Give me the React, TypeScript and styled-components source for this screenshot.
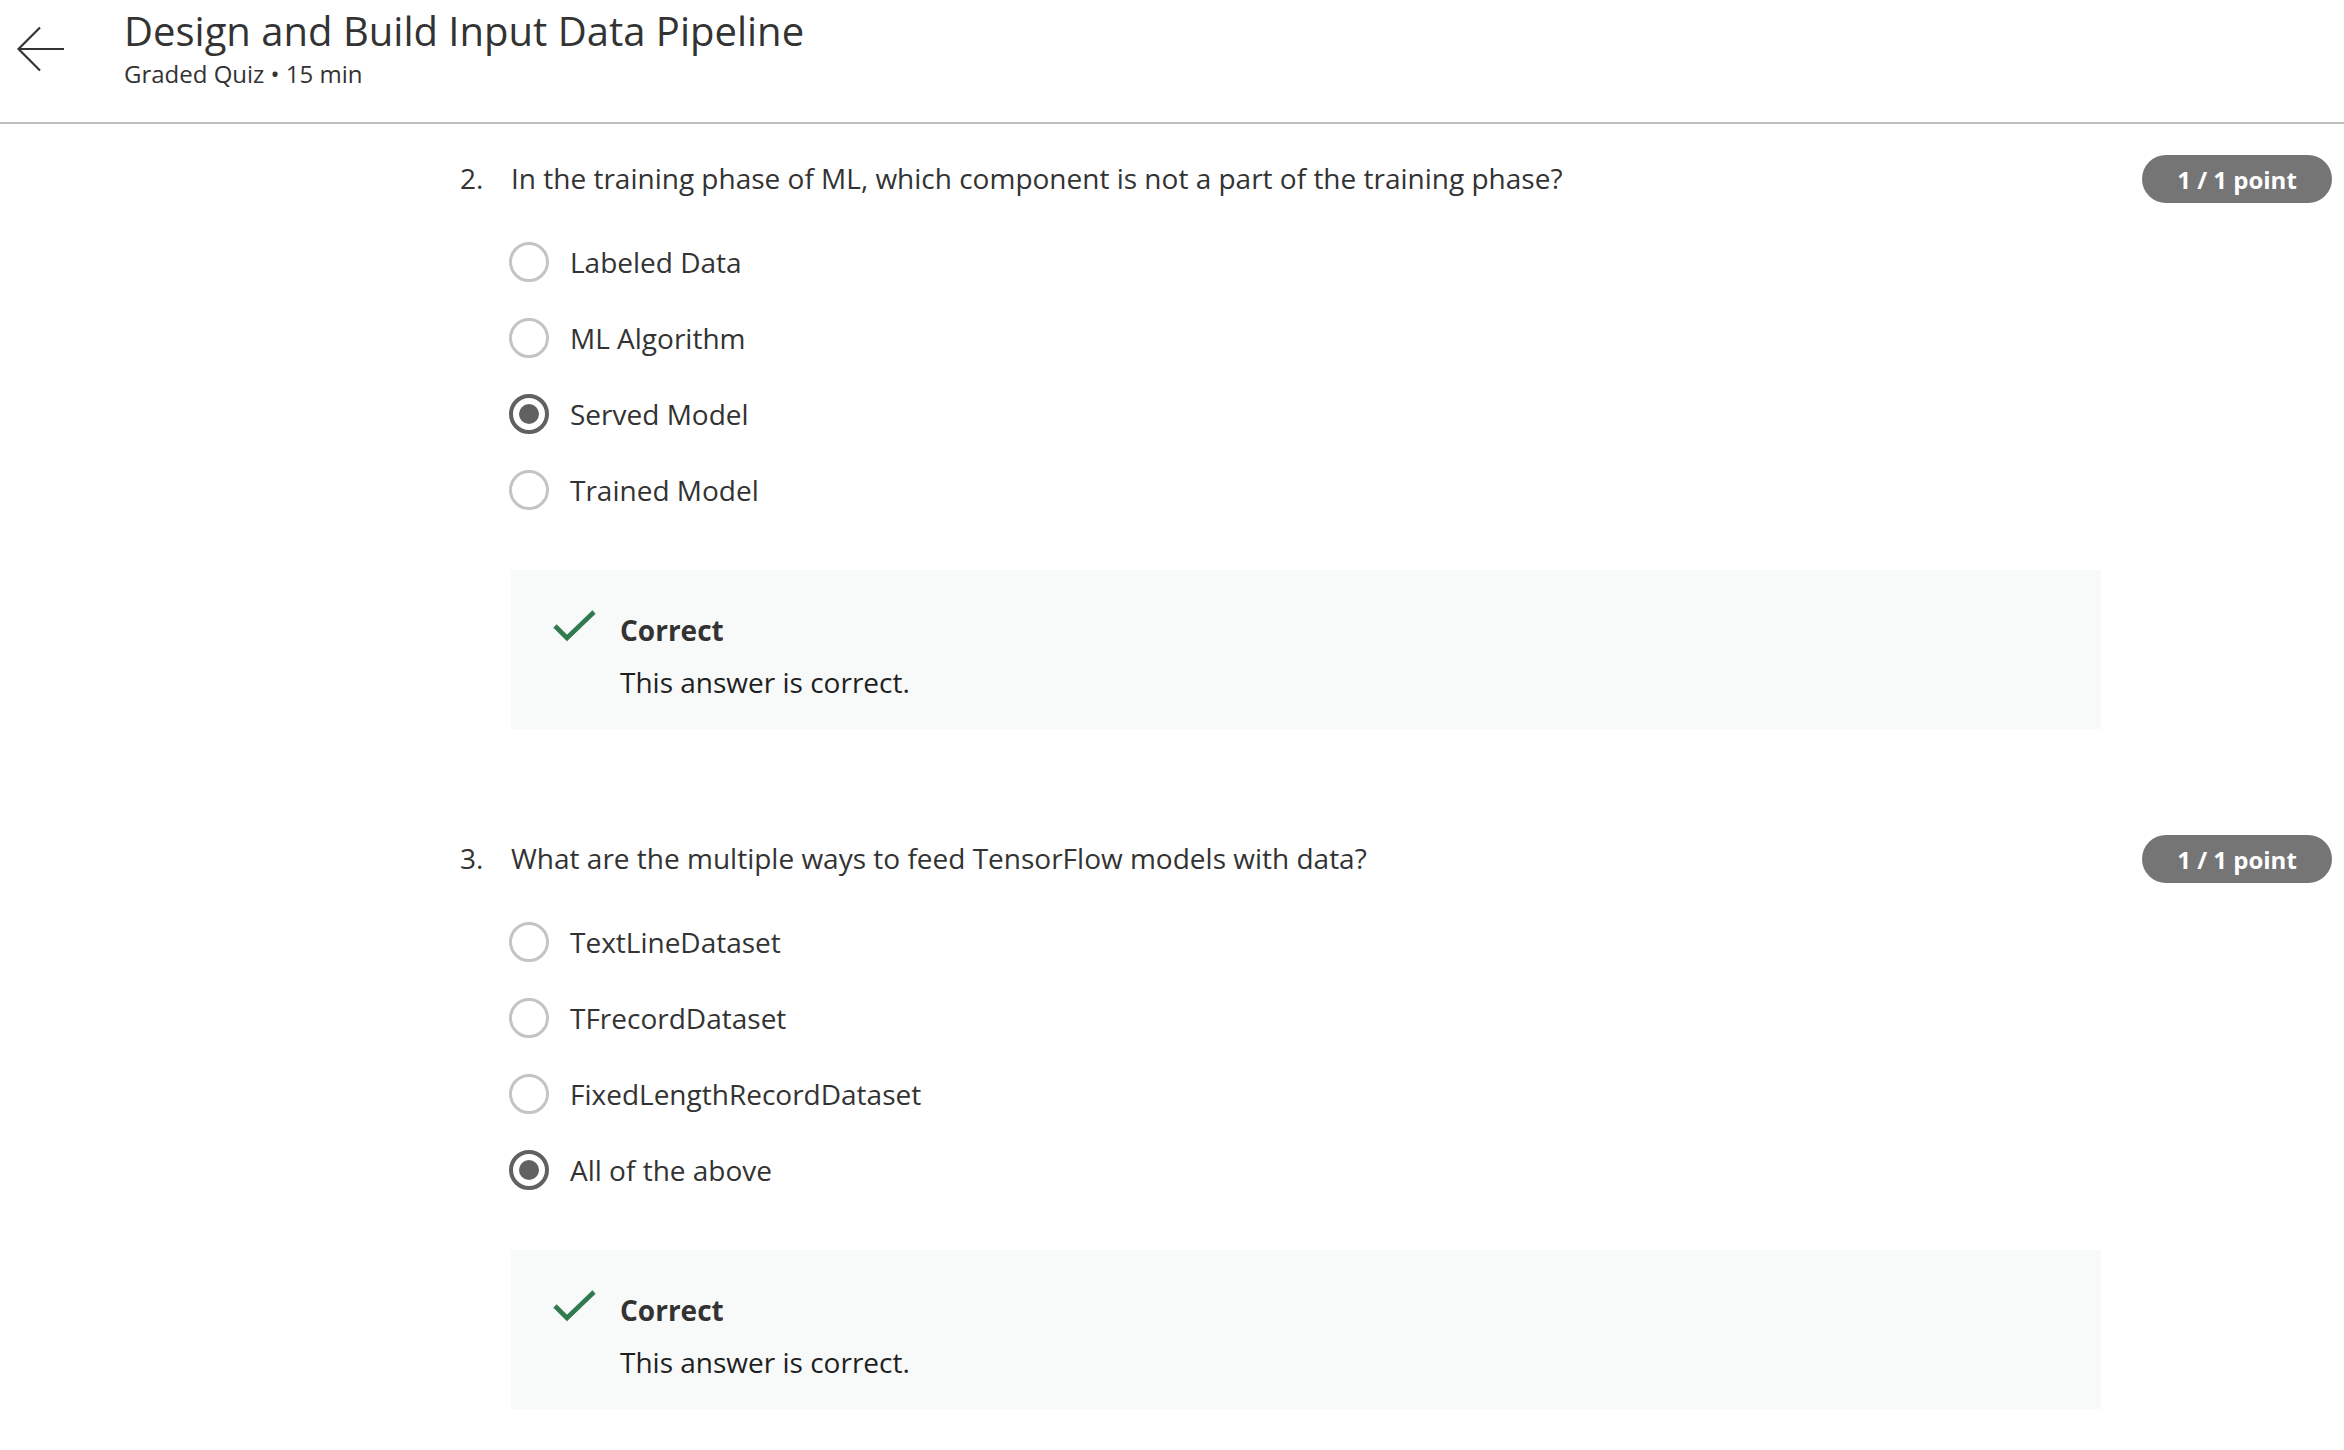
import styled, { createGlobalStyle } from 'styled-components'

const GlobalStyle = createGlobalStyle`
  html, body {
    margin: 0;
    padding: 0;
    background: #ffffff;
  }
  body {
    font-family: "Open Sans", "Noto Sans", sans-serif;
    color: #333333;
  }
`

const Header = styled.header`
  display: flex;
  align-items: flex-start;
  height: 122px;
  border-bottom: 2px solid #bdbdbd;
  box-sizing: content-box;
`

const BackButton = styled.button`
  width: 124px;
  height: 100px;
  padding: 0 0 0 17px;
  margin: 0;
  border: none;
  background: none;
  display: flex;
  align-items: center;
  cursor: pointer;
`

const HeaderText = styled.div`
  display: flex;
  flex-direction: column;
  padding-top: 4px;
`

const Title = styled.h1`
  margin: 0;
  font-size: 40px;
  font-weight: 400;
  line-height: 54px;
  color: #333333;
`

const Subtitle = styled.div`
  font-size: 24px;
  line-height: 32px;
  color: #333333;
`

const Main = styled.main`
  padding: 30px 0 0 460px;
`

const Question = styled.section`
  display: flex;
  align-items: flex-start;
  margin-bottom: 105px;
`

const Number = styled.div`
  width: 51px;
  flex-shrink: 0;
  font-size: 28px;
  line-height: 48px;
`

const Body = styled.div`
  width: 1590px;
  flex-shrink: 0;
`

const Prompt = styled.div`
  font-size: 28px;
  line-height: 48px;
  margin-bottom: 34px;
`

const Options = styled.div`
  display: flex;
  flex-direction: column;
  gap: 24px;
  margin-bottom: 54px;
`

const Option = styled.label`
  display: flex;
  align-items: center;
  gap: 21px;
  height: 52px;
  font-size: 28px;
  color: #333333;
`

const Radio = styled.span<{ $checked?: boolean }>`
  width: 40px;
  height: 40px;
  box-sizing: border-box;
  border-radius: 50%;
  border: ${(p) => (p.$checked ? '4px solid #616161' : '3px solid #c4c4c4')};
  display: flex;
  align-items: center;
  justify-content: center;
  margin-left: -2px;

  &::after {
    content: '';
    display: ${(p) => (p.$checked ? 'block' : 'none')};
    width: 20px;
    height: 20px;
    border-radius: 50%;
    background: #616161;
  }
`

const Feedback = styled.div`
  background: #f8f9f9;
  height: 159px;
  box-sizing: border-box;
  padding: 36px 0 0 42px;
  display: flex;
  gap: 23px;
`

const CheckWrap = styled.div`
  padding-top: 3px;
`

const FeedbackText = styled.div`
  display: flex;
  flex-direction: column;
  gap: 4px;
`

const FeedbackTitle = styled.div`
  font-size: 28px;
  font-weight: 700;
  line-height: 48px;
  color: #333333;
`

const FeedbackMessage = styled.div`
  font-size: 28px;
  line-height: 48px;
  color: #1f1f1f;
`

const Badge = styled.div`
  margin-left: 41px;
  margin-top: 1px;
  width: 190px;
  height: 48px;
  border-radius: 24px;
  background: #757575;
  color: #ffffff;
  font-size: 24px;
  font-weight: 700;
  display: flex;
  align-items: center;
  justify-content: center;
  flex-shrink: 0;
`

type QuizQuestion = {
  number: number
  prompt: string
  options: string[]
  selected: number
}

const questions: QuizQuestion[] = [
  {
    number: 2,
    prompt: 'In the training phase of ML, which component is not a part of the training phase?',
    options: ['Labeled Data', 'ML Algorithm', 'Served Model', 'Trained Model'],
    selected: 2,
  },
  {
    number: 3,
    prompt: 'What are the multiple ways to feed TensorFlow models with data?',
    options: ['TextLineDataset', 'TFrecordDataset', 'FixedLengthRecordDataset', 'All of the above'],
    selected: 3,
  },
]

function ArrowLeft() {
  return (
    <svg width="48" height="48" viewBox="0 0 48 48" fill="none">
      <path d="M47 23H2.5M23 1.5L1.5 23L23 44.5" stroke="#333333" strokeWidth="2.2" />
    </svg>
  )
}

function CheckIcon() {
  return (
    <svg width="44" height="34" viewBox="0 0 44 34" fill="none">
      <path d="M2 17L14 29L41 3" stroke="#317a50" strokeWidth="4.6" />
    </svg>
  )
}

function App() {
  return (
    <>
      <GlobalStyle />
      <Header>
        <BackButton aria-label="Back">
          <ArrowLeft />
        </BackButton>
        <HeaderText>
          <Title>Design and Build Input Data Pipeline</Title>
          <Subtitle>Graded Quiz • 15 min</Subtitle>
        </HeaderText>
      </Header>
      <Main>
        {questions.map((q) => (
          <Question key={q.number}>
            <Number>{q.number}.</Number>
            <Body>
              <Prompt>{q.prompt}</Prompt>
              <Options>
                {q.options.map((opt, i) => (
                  <Option key={opt}>
                    <Radio $checked={i === q.selected} />
                    {opt}
                  </Option>
                ))}
              </Options>
              <Feedback>
                <CheckWrap>
                  <CheckIcon />
                </CheckWrap>
                <FeedbackText>
                  <FeedbackTitle>Correct</FeedbackTitle>
                  <FeedbackMessage>This answer is correct.</FeedbackMessage>
                </FeedbackText>
              </Feedback>
            </Body>
            <Badge>1 / 1 point</Badge>
          </Question>
        ))}
      </Main>
    </>
  )
}

export default App
